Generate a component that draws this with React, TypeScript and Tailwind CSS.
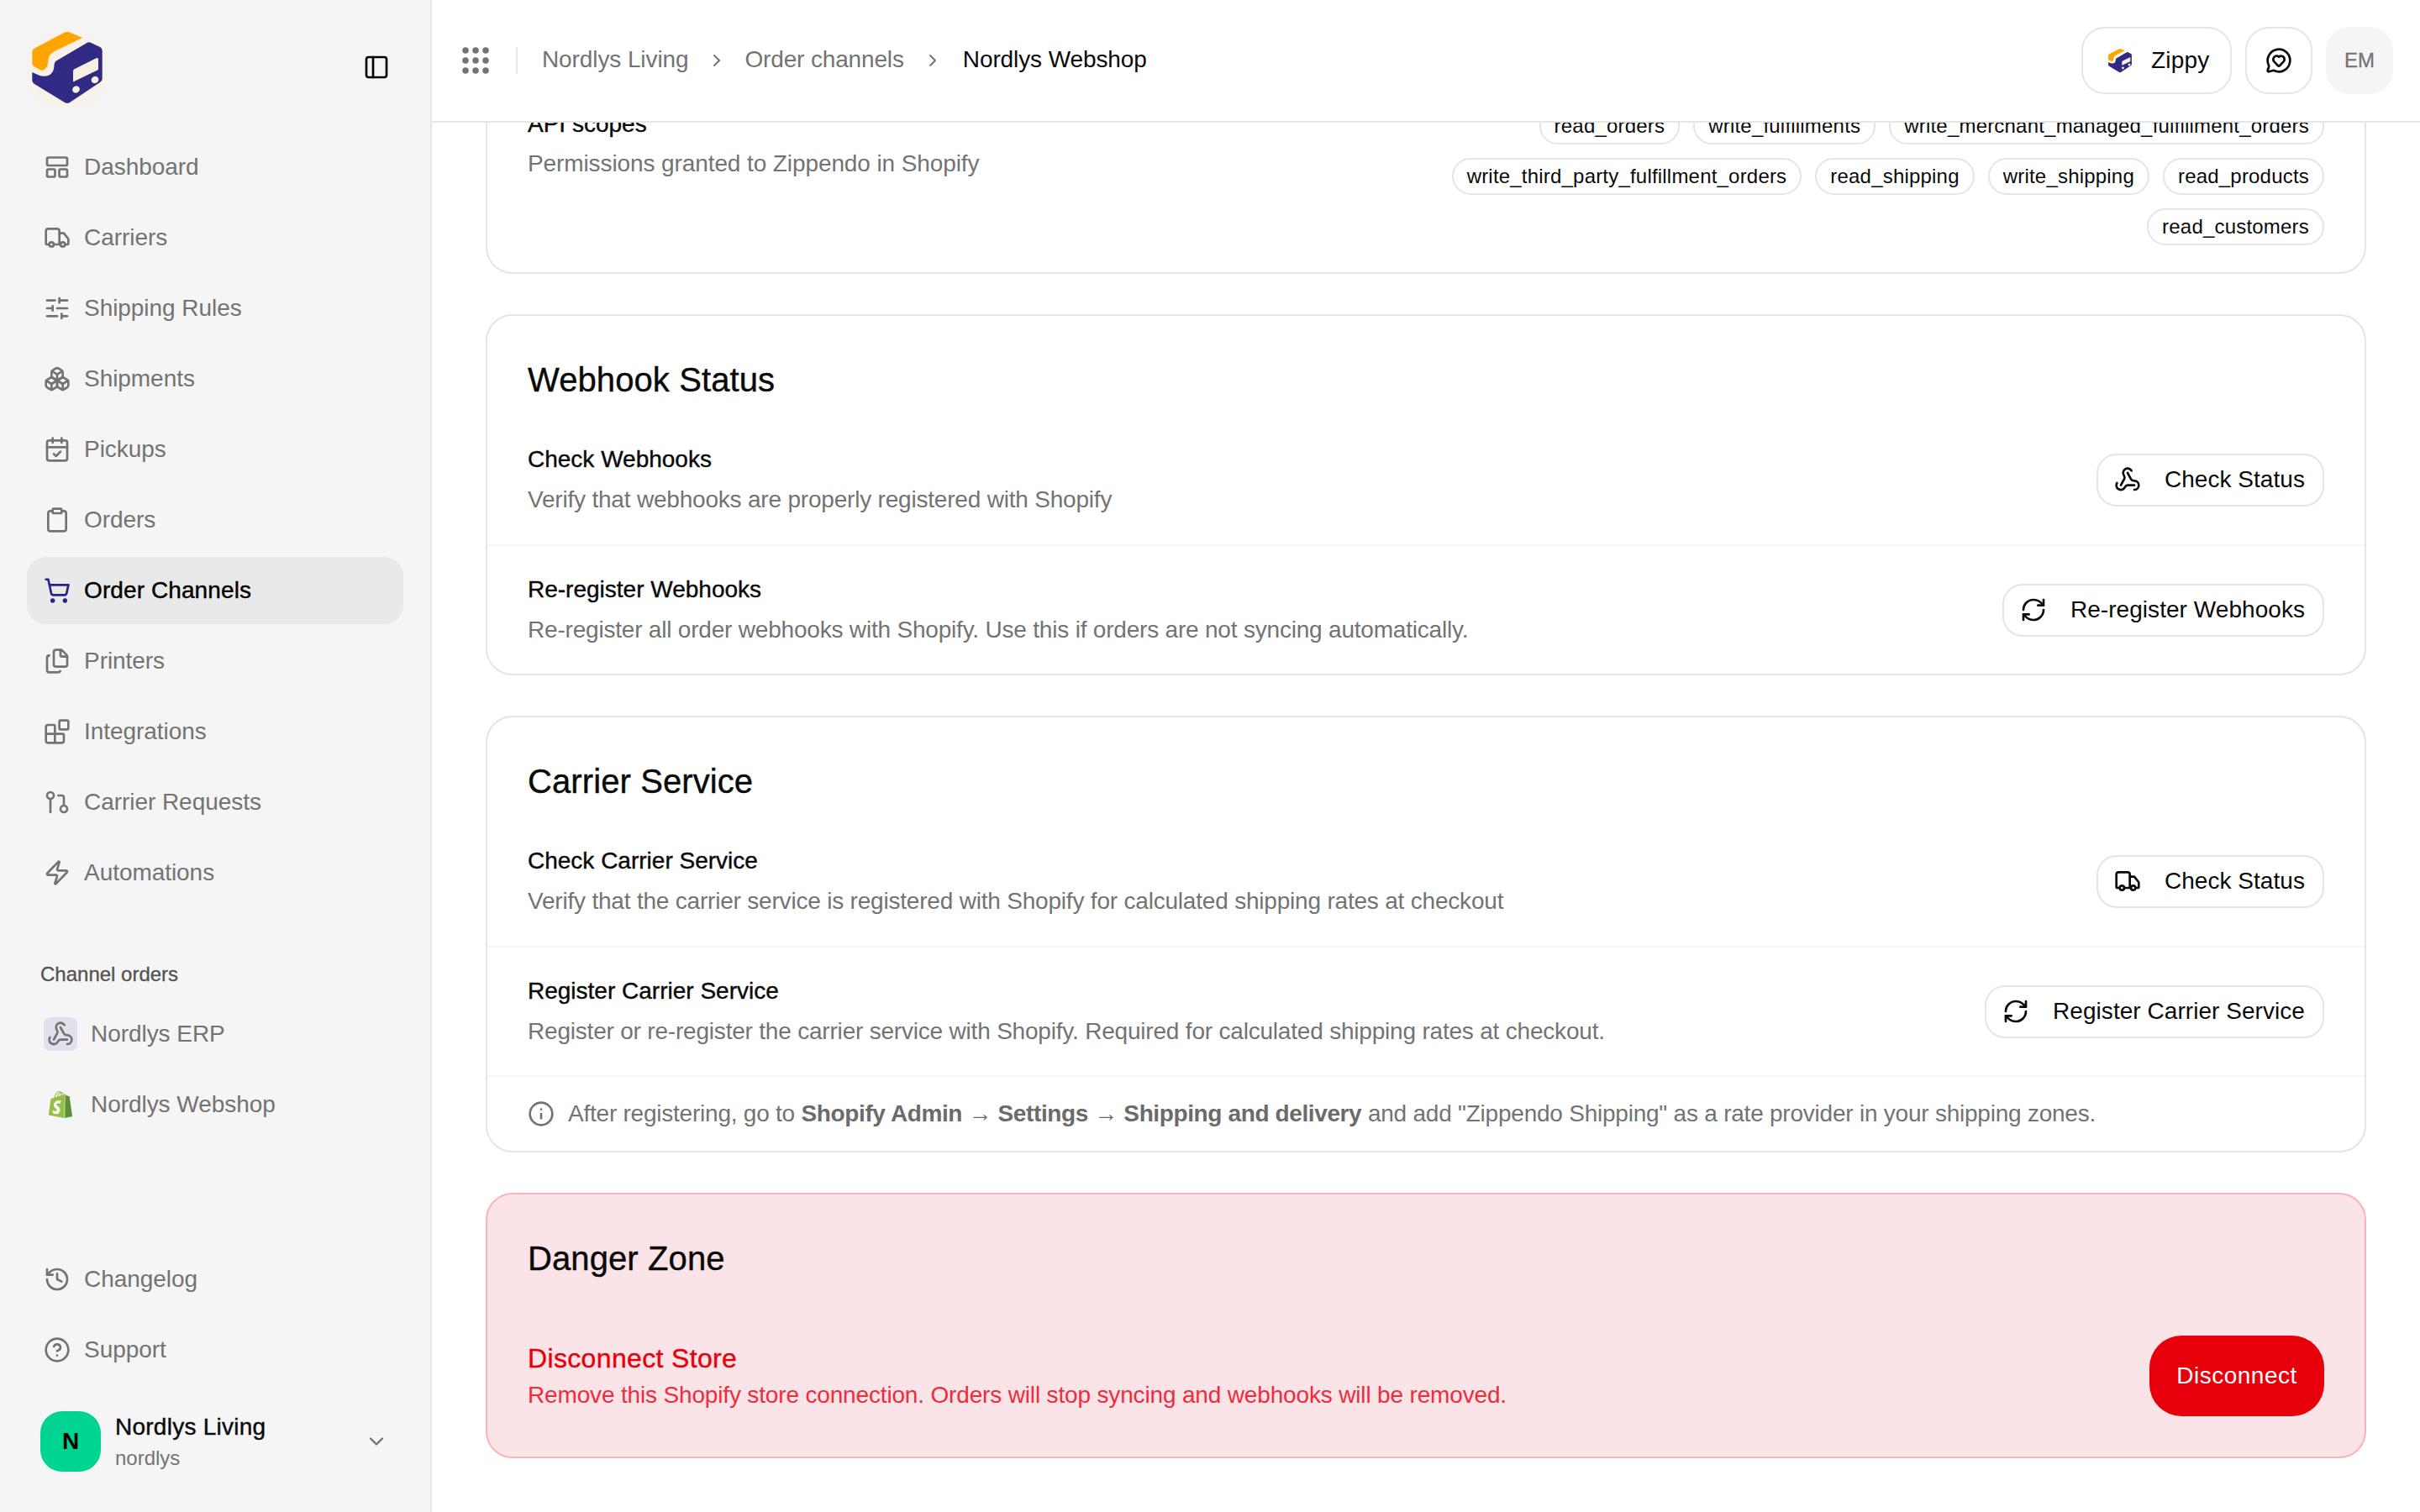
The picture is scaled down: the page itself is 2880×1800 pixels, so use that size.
import type { ReactNode } from 'react';
import {
  Blocks,
  Boxes,
  CalendarCheck,
  ChevronDown,
  ChevronRight,
  CircleHelp,
  Clipboard,
  Files,
  GitPullRequest,
  History,
  Info,
  MessageCircleHeart,
  PanelLeft,
  RefreshCw,
  ShoppingCart,
  SlidersHorizontal,
  Truck,
  Webhook,
  Zap,
} from 'lucide-react';
import { SiShopify } from 'react-icons/si';

function Logo({ className, glow }: { className: string; glow?: boolean }) {
  return (
    <svg viewBox="32 32 96 96" className={className}>
      {glow && (
        <>
          <defs>
            <radialGradient id="logoGlow" cx="50%" cy="55%" r="62%">
              <stop offset="60%" stopColor="#f8efe2" />
              <stop offset="100%" stopColor="#f8efe2" stopOpacity="0" />
            </radialGradient>
          </defs>
          <rect x="32" y="32" width="96" height="96" fill="url(#logoGlow)" opacity="0.7" />
        </>
      )}
      <path
        d="M77 38.5a7 7 0 0 1 6 0L98 45 68 59.5c-7 3.500-10 6-10.500 12-.3 6-2 11-7.500 12.500L41 79.500a5 5 0 0 1-2.700-4V62a5 5 0 0 1 2.700-4.500Z"
        fill="#ffa500"
      />
      <path
        d="M103.500 51a5 5 0 0 1 5 0l10.500 5a5 5 0 0 1 2.700 4.500v33a5 5 0 0 1-2.700 4.500L83 122a6 6 0 0 1-6 0L41 100a5 5 0 0 1-2.700-4V86l9 4c9 2.500 16-1 17-10 .5-6 1-7 6-9.500Z"
        fill="#312a84"
      />
      <path d="M88 82.500 115 69a1.500 1.500 0 0 1 2 1.500v11.500a2 2 0 0 1-1 1.500L89 96.500a1 1 0 0 1-2-1V84Z" fill="#f8efe2" />
      <ellipse cx="90.500" cy="106.500" rx="4.500" ry="4" transform="rotate(-28 90.500 106.500)" fill="#f8efe2" />
      <ellipse cx="113" cy="95" rx="4.500" ry="4" transform="rotate(-28 113 95)" fill="#f8efe2" />
    </svg>
  );
}

function DashboardIcon() {
  return (
    <svg viewBox="0 0 32 32" fill="none" stroke="currentColor" strokeWidth="2.670" className="w-8 h-8 shrink-0">
      <rect x="4" y="4.500" width="24" height="9.500" rx="1.500" />
      <rect x="4" y="18.500" width="9.500" height="9" rx="1.500" />
      <rect x="18.500" y="18.500" width="9.500" height="9" rx="1.500" />
    </svg>
  );
}

function NavItem({ icon, label, active }: { icon: ReactNode; label: string; active?: boolean }) {
  return (
    <div
      className={
        active
          ? 'flex items-center h-20 rounded-[22px] bg-[#e9e9e9] pl-5 gap-4 text-[28px] tracking-[0.1px] text-black [-webkit-text-stroke:0.4px_currentColor]'
          : 'flex items-center h-20 pl-5 gap-4 text-[28px] tracking-[-0.05px] text-[#737373]'
      }
    >
      {icon}
      <span>{label}</span>
    </div>
  );
}

function Tag({ children }: { children: string }) {
  return (
    <span className="flex items-center h-11 rounded-full border-2 border-[#e5e5e5] px-[16px] text-2xl tracking-[0.2px] text-[#0a0a0a]">
      {children}
    </span>
  );
}

function ActionRow({
  title,
  desc,
  icon,
  action,
  divider,
}: {
  title: string;
  desc: string;
  icon: ReactNode;
  action: string;
  divider?: boolean;
}) {
  return (
    <div
      className={
        divider
          ? 'flex items-center justify-between h-[154px] px-12 border-t-2 border-[#f5f5f5]'
          : 'flex items-center justify-between h-[154px] px-12'
      }
    >
      <div className="flex flex-col gap-2">
        <div className="h-10 leading-10 text-[28px] text-[#0a0a0a] [-webkit-text-stroke:0.4px_currentColor]">{title}</div>
        <div className="h-10 leading-10 text-[28px] tracking-[-0.2px] text-[#737373]">{desc}</div>
      </div>
      <button
        type="button"
        className="flex items-center h-[63px] rounded-[24px] border-2 border-[#e5e5e5] pl-[19px] pr-[21px] gap-7 text-[28px] tracking-[0.05px] text-[#0a0a0a] bg-white"
      >
        {icon}
        <span>{action}</span>
      </button>
    </div>
  );
}

function CardTitle({ children }: { children: string }) {
  return (
    <h2 className="h-14 leading-14 text-[40px] tracking-[0.1px] text-[#0a0a0a] [-webkit-text-stroke:0.4px_currentColor]">
      {children}
    </h2>
  );
}

export default function App() {
  const iconClass = 'w-8 h-8 shrink-0';

  return (
    <div className="flex h-screen overflow-hidden bg-white font-['Liberation_Sans',Arial,sans-serif]">
      <aside className="flex flex-col w-[514px] shrink-0 h-full bg-[#f5f5f5] border-r-2 border-[#e5e5e5]">
        <div className="flex items-center justify-between pt-8 pb-[31px] pl-8 pr-[48px]">
          <Logo glow className="w-24 h-24" />
          <PanelLeft size={32} className="text-black" />
        </div>
        <nav className="flex flex-col gap-1 pl-8 pr-8">
          <NavItem icon={<DashboardIcon />} label="Dashboard" />
          <NavItem icon={<Truck className={iconClass} />} label="Carriers" />
          <NavItem icon={<SlidersHorizontal className={iconClass} />} label="Shipping Rules" />
          <NavItem icon={<Boxes className={iconClass} />} label="Shipments" />
          <NavItem icon={<CalendarCheck className={iconClass} />} label="Pickups" />
          <NavItem icon={<Clipboard className={iconClass} />} label="Orders" />
          <NavItem
            active
            icon={<ShoppingCart className="w-8 h-8 shrink-0 text-[#25238f] [-webkit-text-stroke:0]" />}
            label="Order Channels"
          />
          <NavItem icon={<Files className={iconClass} />} label="Printers" />
          <NavItem icon={<Blocks className={iconClass} />} label="Integrations" />
          <NavItem icon={<GitPullRequest className={iconClass} />} label="Carrier Requests" />
          <NavItem icon={<Zap className={iconClass} />} label="Automations" />
        </nav>
        <div className="mt-[61px] mb-[11px] pl-12 h-10 leading-10 text-2xl text-[#525252] [-webkit-text-stroke:0.3px_currentColor]">
          Channel orders
        </div>
        <div className="flex flex-col gap-1 pl-[52px]">
          <div className="flex items-center h-20 gap-4 text-[28px] tracking-[-0.05px] text-[#737373]">
            <span className="flex items-center justify-center w-10 h-10 rounded-lg bg-[#e0e1ea]">
              <Webhook size={32} />
            </span>
            <span>Nordlys ERP</span>
          </div>
          <div className="flex items-center h-20 gap-4 text-[28px] tracking-[-0.05px] text-[#737373]">
            <span className="relative flex items-center justify-center w-10 h-10">
              <SiShopify size={32} className="text-[#95bf47]" />
              <SiShopify size={32} className="absolute left-1 top-1 text-[#5e8e3e] [clip-path:inset(0_0_0_68%)]" />
            </span>
            <span>Nordlys Webshop</span>
          </div>
        </div>
        <div className="mt-auto flex flex-col gap-1 pl-8 pr-8">
          <NavItem icon={<History className={iconClass} />} label="Changelog" />
          <NavItem icon={<CircleHelp className={iconClass} />} label="Support" />
        </div>
        <div className="flex items-center mt-[33px] mb-12 pl-12 pr-[50px]">
          <span className="flex items-center justify-center w-[72px] h-[72px] rounded-[26px] bg-[#00d492] text-[28px] font-bold text-black">
            N
          </span>
          <div className="ml-[17px] flex flex-col">
            <span className="h-[38px] leading-[38px] text-[28px] tracking-[0.25px] text-[#0a0a0a] [-webkit-text-stroke:0.4px_currentColor]">
              Nordlys Living
            </span>
            <span className="h-[34px] pt-[1px] leading-[34px] text-2xl text-[#737373]">nordlys</span>
          </div>
          <ChevronDown size={28} className="ml-auto text-[#737373]" />
        </div>
      </aside>

      <div className="flex flex-col flex-1 min-w-0 h-full">
        <header className="flex items-center shrink-0 h-[146px] pl-9 pr-8 bg-white border-b-2 border-[#e5e5e5]">
          <svg viewBox="0 0 32 32" className="w-8 h-8 text-[#737373]" fill="currentColor">
            {[4, 16, 28].map((y) =>
              [4, 16, 28].map((x) => <circle key={`${x}-${y}`} cx={x} cy={y} r="3.800" />)
            )}
          </svg>
          <span className="ml-[32px] w-0.5 h-8 bg-[#e5e5e5]" />
          <span className="ml-[29px] pb-[2px] text-[28px] tracking-[-0.1px] text-[#737373]">Nordlys Living</span>
          <ChevronRight size={24} className="ml-[22px] text-[#737373]" />
          <span className="ml-[21px] pb-[2px] text-[28px] tracking-[-0.15px] text-[#737373]">Order channels</span>
          <ChevronRight size={24} className="ml-[22px] text-[#737373]" />
          <span className="ml-[24px] pb-[2px] text-[28px] tracking-[-0.1px] text-[#0a0a0a]">Nordlys Webshop</span>
          <div className="ml-auto flex items-center gap-4">
            <button
              type="button"
              className="flex items-center h-20 w-[179px] rounded-[28px] border-2 border-[#e5e5e5] pl-[28px] gap-[21px] text-[28px] tracking-[0.2px] text-[#0a0a0a]"
            >
              <Logo className="w-8 h-8" />
              <span>Zippy</span>
            </button>
            <button
              type="button"
              className="flex items-center justify-center w-20 h-20 rounded-[28px] border-2 border-[#e5e5e5] text-[#0a0a0a]"
            >
              <MessageCircleHeart size={32} />
            </button>
            <span className="flex items-center justify-center w-20 h-20 rounded-[28px] bg-[#f5f5f5] text-2xl text-[#737373] [-webkit-text-stroke:0.3px_currentColor]">
              EM
            </span>
          </div>
        </header>

        <main className="flex-1 min-h-0 overflow-hidden px-16">
          <div className="flex flex-col gap-12 -mt-[100px]">
            <section className="flex justify-between h-[280px] pt-[80px] px-12 rounded-[32px] border-2 border-[#e5e5e5]">
              <div className="flex flex-col gap-[7px] shrink-0">
                <div className="h-10 leading-10 text-[28px] text-[#0a0a0a] [-webkit-text-stroke:0.4px_currentColor]">
                  API scopes
                </div>
                <div className="h-10 leading-10 text-[28px] tracking-[-0.1px] text-[#737373]">
                  Permissions granted to Zippendo in Shopify
                </div>
              </div>
              <div className="flex flex-wrap content-start justify-end gap-4 w-[1240px]">
                <Tag>read_orders</Tag>
                <Tag>write_fulfillments</Tag>
                <Tag>write_merchant_managed_fulfillment_orders</Tag>
                <Tag>write_third_party_fulfillment_orders</Tag>
                <Tag>read_shipping</Tag>
                <Tag>write_shipping</Tag>
                <Tag>read_products</Tag>
                <Tag>read_customers</Tag>
              </div>
            </section>

            <section className="rounded-[32px] border-2 border-[#e5e5e5]">
              <div className="pt-12 pb-[14px] px-12">
                <CardTitle>Webhook Status</CardTitle>
              </div>
              <ActionRow
                title="Check Webhooks"
                desc="Verify that webhooks are properly registered with Shopify"
                icon={<Webhook size={32} />}
                action="Check Status"
              />
              <ActionRow
                divider
                title="Re-register Webhooks"
                desc="Re-register all order webhooks with Shopify. Use this if orders are not syncing automatically."
                icon={<RefreshCw size={32} />}
                action="Re-register Webhooks"
              />
            </section>

            <section className="rounded-[32px] border-2 border-[#e5e5e5]">
              <div className="pt-12 pb-[14px] px-12">
                <CardTitle>Carrier Service</CardTitle>
              </div>
              <ActionRow
                title="Check Carrier Service"
                desc="Verify that the carrier service is registered with Shopify for calculated shipping rates at checkout"
                icon={<Truck size={32} />}
                action="Check Status"
              />
              <ActionRow
                divider
                title="Register Carrier Service"
                desc="Register or re-register the carrier service with Shopify. Required for calculated shipping rates at checkout."
                icon={<RefreshCw size={32} />}
                action="Register Carrier Service"
              />
              <div className="flex items-center h-[90px] px-12 gap-4 border-t-2 border-[#f5f5f5] text-[28px] tracking-[-0.23px] text-[#737373]">
                <Info size={32} className="shrink-0" />
                <p>
                  After registering, go to{' '}
                  <strong className="font-bold tracking-[-0.38px] text-[#6b6b6b]">
                    Shopify Admin → Settings → Shipping and delivery
                  </strong>{' '}
                  and add "Zippendo Shipping" as a rate provider in your shipping zones.
                </p>
              </div>
            </section>

            <section className="px-12 pt-12 pb-12 rounded-[32px] border-2 border-[#f8b4b9] bg-[#fbe4e7]">
              <CardTitle>Danger Zone</CardTitle>
              <div className="flex items-center justify-between mt-16">
                <div className="flex flex-col gap-1 pt-[2px]">
                  <div className="h-10 leading-10 text-[32px] tracking-[0.35px] text-[#e7000b] [-webkit-text-stroke:0.4px_currentColor]">
                    Disconnect Store
                  </div>
                  <div className="h-10 leading-10 text-[28px] tracking-[-0.16px] text-[#f02b3c]">
                    Remove this Shopify store connection. Orders will stop syncing and webhooks will be removed.
                  </div>
                </div>
                <button
                  type="button"
                  className="flex items-center justify-center w-[208px] h-24 rounded-[38px] bg-[#e7000b] text-[28px] tracking-[0.5px] text-white"
                >
                  Disconnect
                </button>
              </div>
            </section>
          </div>
        </main>
      </div>
    </div>
  );
}
